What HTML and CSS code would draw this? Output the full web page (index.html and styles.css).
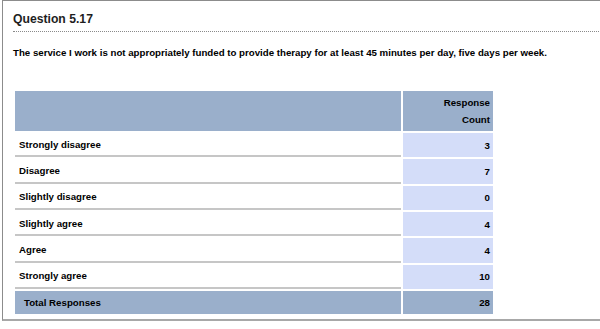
FILE: index.html
```html
<!DOCTYPE html>
<html>
<head>
<meta charset="utf-8">
<link rel="stylesheet" href="styles.css">
</head>
<body>
<div class="panel">
  <h2 class="title">Question 5.17</h2>
  <p class="question">The service I work is not appropriately funded to provide therapy for at least 45 minutes per day, five days per week.</p>
  <table class="results">
    <tr class="head">
      <th class="label-head"></th>
      <th class="count-head">Response<br>Count</th>
    </tr>
    <tr class="row"><td class="label">Strongly disagree</td><td class="count">3</td></tr>
    <tr class="row"><td class="label">Disagree</td><td class="count">7</td></tr>
    <tr class="row"><td class="label">Slightly disagree</td><td class="count">0</td></tr>
    <tr class="row"><td class="label">Slightly agree</td><td class="count">4</td></tr>
    <tr class="row"><td class="label">Agree</td><td class="count">4</td></tr>
    <tr class="row"><td class="label">Strongly agree</td><td class="count">10</td></tr>
    <tr class="total"><td class="total-label">Total Responses</td><td class="total-count">28</td></tr>
  </table>
</div>
<div class="panel next"></div>
</body>
</html>
```

FILE: styles.css
```css
html, body {
  margin: 0;
  padding: 0;
  background: #fff;
  overflow: hidden;
}
body {
  width: 600px;
  height: 329px;
  font-family: "Liberation Sans", Arial, sans-serif;
  font-weight: bold;
  color: #000;
}
.panel {
  margin-left: 2px;
  width: 640px;
  border: 1px solid #8c8c8c;
  border-bottom: 2px solid #a8a8a8;
  padding: 10px 10px 3px 10px;
  box-sizing: border-box;
}
.title {
  margin: 0;
  font-size: 12.2px;
  line-height: 16px;
  color: #1e1e1e;
  padding-bottom: 4px;
  border-bottom: 1px dotted #8a8a8a;
}
.question {
  margin: 14px 0 29px 0;
  font-size: 9.7px;
  line-height: 14px;
}
.results {
  border-spacing: 2px;
  width: 482px;
  table-layout: fixed;
  font-size: 9.7px;
}
.results th, .results td {
  box-sizing: border-box;
}
.label-head {
  width: 386px;
  background: #9aafcb;
  height: 40px;
  padding: 0;
}
.count-head {
  width: 90px;
  background: #9aafcb;
  text-align: right;
  padding: 0 3px 0 0;
  line-height: 17px;
  font-size: 9.7px;
}
.label, .count, .total-label, .total-count {
  padding: 0;
  vertical-align: middle;
}
.label {
  height: 24.33px;
  padding-left: 4px;
  border-bottom: 2px solid #c6c6c6;
}
.count {
  height: 24.33px;
  background: #d4ddf9;
  text-align: right;
  padding-right: 3px;
}
.total-label {
  height: 23.5px;
  background: #9aafcb;
  padding-left: 9px;
}
.total-count {
  background: #9aafcb;
  text-align: right;
  padding-right: 3px;
}
.next {
  margin-top: 8px;
  height: 20px;
  border-top: 2px solid #a8a8a8;
}
```
